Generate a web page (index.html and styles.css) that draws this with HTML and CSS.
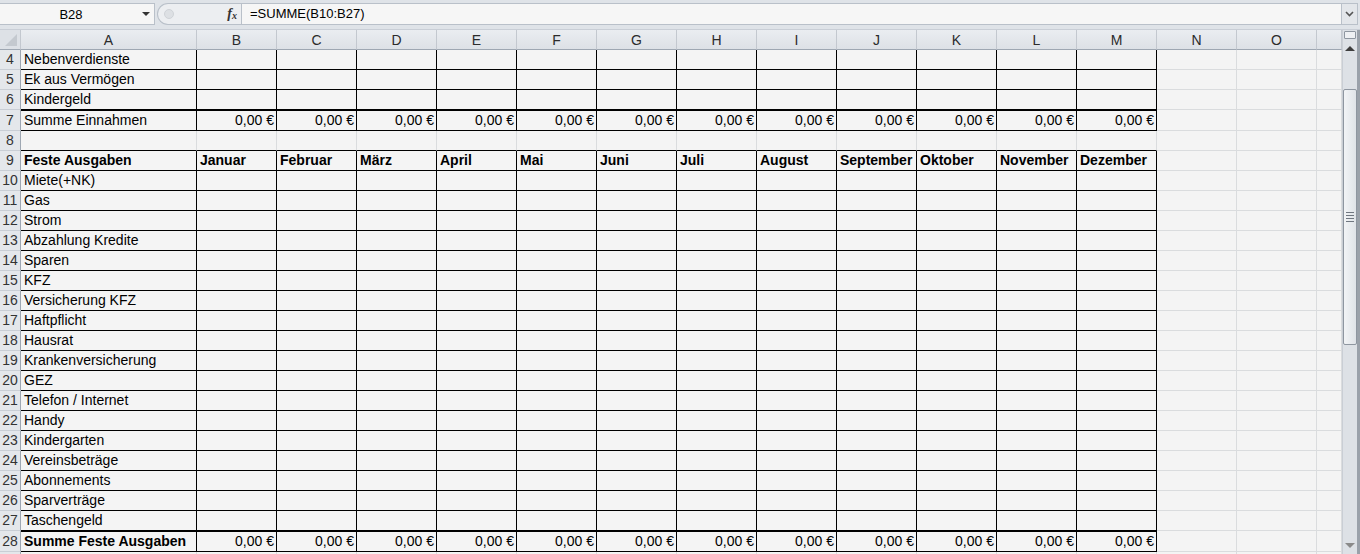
FILE: index.html
```html
<!DOCTYPE html>
<html>
	<head>
		<title>Haushaltsbuch</title>
		<meta charset="UTF-8">
		<meta name="viewport" content="width=device-width, initial-scale=1.0">
		<link rel="stylesheet" href="styles.css">
	</head>
	<body>
		<div class="fbar">
			<div class="namebox">
				<span class="ref">B28</span>
				<span class="dd"></span>
			</div>
			<div class="pill">
				<span class="knob"></span>
				<span class="fx">f<sub>x</sub></span>
			</div>
			<div class="formula">=SUMME(B10:B27)</div>
			<div class="expand">
				<svg width="9" height="6" viewBox="0 0 9 6"><path d="M1 1 L4.5 4.5 L8 1" fill="none" stroke="#555" stroke-width="1.6"/></svg>
			</div>
		</div>

		<div class="main">
			<div class="sheet">
				<div class="r cols">
					<div class="corner"></div>
					<div>A</div><div>B</div><div>C</div><div>D</div><div>E</div><div>F</div><div>G</div>
					<div>H</div><div>I</div><div>J</div><div>K</div><div>L</div><div>M</div><div>N</div><div>O</div><div></div>
				</div>

				<div class="r t">
					<div class="h">4</div><div>Nebenverdienste</div>
					<div></div><div></div><div></div><div></div><div></div><div></div><div></div><div></div><div></div><div></div><div></div><div></div>
					<div></div><div></div><div></div>
				</div>
				<div class="r t">
					<div class="h">5</div><div>Ek aus Vermögen</div>
					<div></div><div></div><div></div><div></div><div></div><div></div><div></div><div></div><div></div><div></div><div></div><div></div>
					<div></div><div></div><div></div>
				</div>
				<div class="r t">
					<div class="h">6</div><div>Kindergeld</div>
					<div></div><div></div><div></div><div></div><div></div><div></div><div></div><div></div><div></div><div></div><div></div><div></div>
					<div></div><div></div><div></div>
				</div>
				<div class="r t sum">
					<div class="h">7</div><div>Summe Einnahmen</div>
					<div class="n">0,00 €</div><div class="n">0,00 €</div><div class="n">0,00 €</div><div class="n">0,00 €</div>
					<div class="n">0,00 €</div><div class="n">0,00 €</div><div class="n">0,00 €</div><div class="n">0,00 €</div>
					<div class="n">0,00 €</div><div class="n">0,00 €</div><div class="n">0,00 €</div><div class="n">0,00 €</div>
					<div></div><div></div><div></div>
				</div>
				<div class="r gap">
					<div class="h">8</div><div></div>
					<div></div><div></div><div></div><div></div><div></div><div></div><div></div><div></div><div></div><div></div><div></div><div></div>
					<div></div><div></div><div></div>
				</div>
				<div class="r t bold">
					<div class="h">9</div><div>Feste Ausgaben</div>
					<div>Januar</div><div>Februar</div><div>März</div><div>April</div><div>Mai</div><div>Juni</div>
					<div>Juli</div><div>August</div><div>September</div><div>Oktober</div><div>November</div><div>Dezember</div>
					<div></div><div></div><div></div>
				</div>
				<div class="r t">
					<div class="h">10</div><div>Miete(+NK)</div>
					<div></div><div></div><div></div><div></div><div></div><div></div><div></div><div></div><div></div><div></div><div></div><div></div>
					<div></div><div></div><div></div>
				</div>
				<div class="r t">
					<div class="h">11</div><div>Gas</div>
					<div></div><div></div><div></div><div></div><div></div><div></div><div></div><div></div><div></div><div></div><div></div><div></div>
					<div></div><div></div><div></div>
				</div>
				<div class="r t">
					<div class="h">12</div><div>Strom</div>
					<div></div><div></div><div></div><div></div><div></div><div></div><div></div><div></div><div></div><div></div><div></div><div></div>
					<div></div><div></div><div></div>
				</div>
				<div class="r t">
					<div class="h">13</div><div>Abzahlung Kredite</div>
					<div></div><div></div><div></div><div></div><div></div><div></div><div></div><div></div><div></div><div></div><div></div><div></div>
					<div></div><div></div><div></div>
				</div>
				<div class="r t">
					<div class="h">14</div><div>Sparen</div>
					<div></div><div></div><div></div><div></div><div></div><div></div><div></div><div></div><div></div><div></div><div></div><div></div>
					<div></div><div></div><div></div>
				</div>
				<div class="r t">
					<div class="h">15</div><div>KFZ</div>
					<div></div><div></div><div></div><div></div><div></div><div></div><div></div><div></div><div></div><div></div><div></div><div></div>
					<div></div><div></div><div></div>
				</div>
				<div class="r t">
					<div class="h">16</div><div>Versicherung KFZ</div>
					<div></div><div></div><div></div><div></div><div></div><div></div><div></div><div></div><div></div><div></div><div></div><div></div>
					<div></div><div></div><div></div>
				</div>
				<div class="r t">
					<div class="h">17</div><div>Haftpflicht</div>
					<div></div><div></div><div></div><div></div><div></div><div></div><div></div><div></div><div></div><div></div><div></div><div></div>
					<div></div><div></div><div></div>
				</div>
				<div class="r t">
					<div class="h">18</div><div>Hausrat</div>
					<div></div><div></div><div></div><div></div><div></div><div></div><div></div><div></div><div></div><div></div><div></div><div></div>
					<div></div><div></div><div></div>
				</div>
				<div class="r t">
					<div class="h">19</div><div>Krankenversicherung</div>
					<div></div><div></div><div></div><div></div><div></div><div></div><div></div><div></div><div></div><div></div><div></div><div></div>
					<div></div><div></div><div></div>
				</div>
				<div class="r t">
					<div class="h">20</div><div>GEZ</div>
					<div></div><div></div><div></div><div></div><div></div><div></div><div></div><div></div><div></div><div></div><div></div><div></div>
					<div></div><div></div><div></div>
				</div>
				<div class="r t">
					<div class="h">21</div><div>Telefon / Internet</div>
					<div></div><div></div><div></div><div></div><div></div><div></div><div></div><div></div><div></div><div></div><div></div><div></div>
					<div></div><div></div><div></div>
				</div>
				<div class="r t">
					<div class="h">22</div><div>Handy</div>
					<div></div><div></div><div></div><div></div><div></div><div></div><div></div><div></div><div></div><div></div><div></div><div></div>
					<div></div><div></div><div></div>
				</div>
				<div class="r t">
					<div class="h">23</div><div>Kindergarten</div>
					<div></div><div></div><div></div><div></div><div></div><div></div><div></div><div></div><div></div><div></div><div></div><div></div>
					<div></div><div></div><div></div>
				</div>
				<div class="r t">
					<div class="h">24</div><div>Vereinsbeträge</div>
					<div></div><div></div><div></div><div></div><div></div><div></div><div></div><div></div><div></div><div></div><div></div><div></div>
					<div></div><div></div><div></div>
				</div>
				<div class="r t">
					<div class="h">25</div><div>Abonnements</div>
					<div></div><div></div><div></div><div></div><div></div><div></div><div></div><div></div><div></div><div></div><div></div><div></div>
					<div></div><div></div><div></div>
				</div>
				<div class="r t">
					<div class="h">26</div><div>Sparverträge</div>
					<div></div><div></div><div></div><div></div><div></div><div></div><div></div><div></div><div></div><div></div><div></div><div></div>
					<div></div><div></div><div></div>
				</div>
				<div class="r t">
					<div class="h">27</div><div>Taschengeld</div>
					<div></div><div></div><div></div><div></div><div></div><div></div><div></div><div></div><div></div><div></div><div></div><div></div>
					<div></div><div></div><div></div>
				</div>
				<div class="r t sum">
					<div class="h">28</div><div class="b">Summe Feste Ausgaben</div>
					<div class="n">0,00 €</div><div class="n">0,00 €</div><div class="n">0,00 €</div><div class="n">0,00 €</div>
					<div class="n">0,00 €</div><div class="n">0,00 €</div><div class="n">0,00 €</div><div class="n">0,00 €</div>
					<div class="n">0,00 €</div><div class="n">0,00 €</div><div class="n">0,00 €</div><div class="n">0,00 €</div>
					<div></div><div></div><div></div>
				</div>
				<div class="r">
					<div class="h"></div><div></div>
					<div></div><div></div><div></div><div></div><div></div><div></div><div></div><div></div><div></div><div></div><div></div><div></div>
					<div></div><div></div><div></div>
				</div>
			</div>

			<div class="vscroll">
				<div class="split"></div>
				<div class="arrow up"></div>
				<div class="thumb"><span></span><span></span><span></span><span></span></div>
				<div class="track"></div>
				<div class="arrow down"></div>
			</div>
		</div>
	</body>
</html>
```

FILE: styles.css
```css
body {
	margin: 0;
	background: #f4f4f4;
	font-family: "Liberation Sans", Arial, sans-serif;
	font-size: 14px;
	color: #000;
	overflow: hidden;
}
/* formula bar */
.fbar {
	display: flex;
	height: 30px;
	box-sizing: border-box;
	padding: 3px 2px 4px 0;
	background: #dfe3e8;
	border-bottom: 1px solid #c9ced6;
}
.namebox {
	display: flex;
	align-items: center;
	width: 155px;
	box-sizing: border-box;
	background: #f6f6f6;
	border: 1px solid #b9c0c9;
	border-left: none;
}
.namebox .ref {
	flex: 1;
	text-align: center;
	font-size: 13px;
}
.namebox .dd {
	width: 0;
	height: 0;
	border: 4px solid transparent;
	border-top: 4px solid #333;
	border-bottom: none;
	margin-right: 4px;
}
.pill {
	display: flex;
	align-items: center;
	justify-content: space-between;
	width: 84px;
	margin-left: 2px;
	box-sizing: border-box;
	background: #eceef1;
	border: 1px solid #b9c0c9;
	border-right: none;
	border-radius: 11px 0 0 11px;
	padding: 0 4px 0 6px;
}
.knob {
	width: 8px;
	height: 8px;
	border-radius: 50%;
	background: #dde0e4;
	border: 1px solid #cfd3d8;
}
.fx {
	font-family: "Liberation Serif", serif;
	font-style: italic;
	font-weight: bold;
	font-size: 14px;
	color: #333;
}
.fx sub {
	font-size: 10px;
	vertical-align: -1px;
}
.formula {
	flex: 1;
	background: #f6f6f6;
	border: 1px solid #b9c0c9;
	padding-left: 8px;
	font-size: 13px;
	line-height: 20px;
}
.expand {
	width: 15px;
	display: flex;
	align-items: center;
	justify-content: center;
	background: #e3e6ea;
	border: 1px solid #b9c0c9;
	border-left: none;
}
/* grid */
.main {
	display: flex;
}
.sheet {
	flex: 1;
	overflow: hidden;
}
.r {
	display: grid;
	grid-template-columns: 21px 176px repeat(14, 80px) 1fr;
	height: 20px;
}
.r > div {
	box-sizing: border-box;
	border-right: 1px solid #dadcde;
	border-bottom: 1px solid #dadcde;
	line-height: 19px;
	padding-left: 3px;
	white-space: nowrap;
	overflow: hidden;
}
.r > .h {
	padding: 0;
	text-align: center;
	color: #333;
	background: #e4e7eb;
	border-right-color: #9ea7b2;
	border-bottom-color: #c9ced5;
}
.cols {
	height: 20px;
}
.cols > div {
	padding: 0 !important;
	text-align: center;
	line-height: 20px !important;
	color: #2b2b2b;
	background: linear-gradient(#eaedf1, #dde1e6);
	border-right-color: #c3c8cf !important;
	border-bottom-color: #9ea7b2 !important;
}
.cols > .corner {
	background: #dde1e6;
	position: relative;
}
.corner::after {
	content: "";
	position: absolute;
	right: 3px;
	bottom: 3px;
	border: 6px solid transparent;
	border-right-color: #c4c9cf;
	border-bottom-color: #c4c9cf;
}
.t > div:nth-child(n+2):nth-child(-n+14) {
	border-color: #000;
}
.gap > div:nth-child(n+2):nth-child(-n+14) {
	border-bottom-color: #000;
}
.sum {
	height: 21px;
}
.sum > div:nth-child(n+2):nth-child(-n+14) {
	border-top: 1px solid #000;
}
.sum > .h {
	line-height: 21px;
}
.bold > div, .b {
	font-weight: bold;
}
.bold > .h {
	font-weight: normal;
}
.n {
	text-align: right;
	padding: 0 2px 0 0 !important;
}
/* scroll bar */
.vscroll {
	width: 18px;
	height: 524px;
	box-sizing: border-box;
	display: flex;
	flex-direction: column;
	background: #dde1e6;
	border-right: 3px solid #9aa1aa;
	border-left: 1px solid #c9ced5;
}
.split {
	height: 6px;
	margin: 1px 1px 0;
	background: #eef0f3;
	border: 1px solid #8e96a0;
	border-radius: 1px;
}
.arrow {
	height: 18px;
	display: flex;
	align-items: center;
	justify-content: center;
}
.arrow::before {
	content: "";
	border: 4px solid transparent;
	border-left-width: 5px;
	border-right-width: 5px;
}
.up::before {
	border-bottom: 5px solid #3d3d3d;
	border-top: none;
}
.down::before {
	border-top: 5px solid #8a8a8a;
	border-bottom: none;
}
.thumb {
	height: 254px;
	margin-top: 32px;
	display: flex;
	flex-direction: column;
	align-items: center;
	justify-content: center;
	gap: 2px;
	background: linear-gradient(90deg, #f2f4f6, #dfe3e8);
	border: 1px solid #8e96a0;
	border-radius: 2px;
}
.thumb span {
	width: 8px;
	height: 1px;
	background: #6f7680;
}
.track {
	flex: 1;
}
```
